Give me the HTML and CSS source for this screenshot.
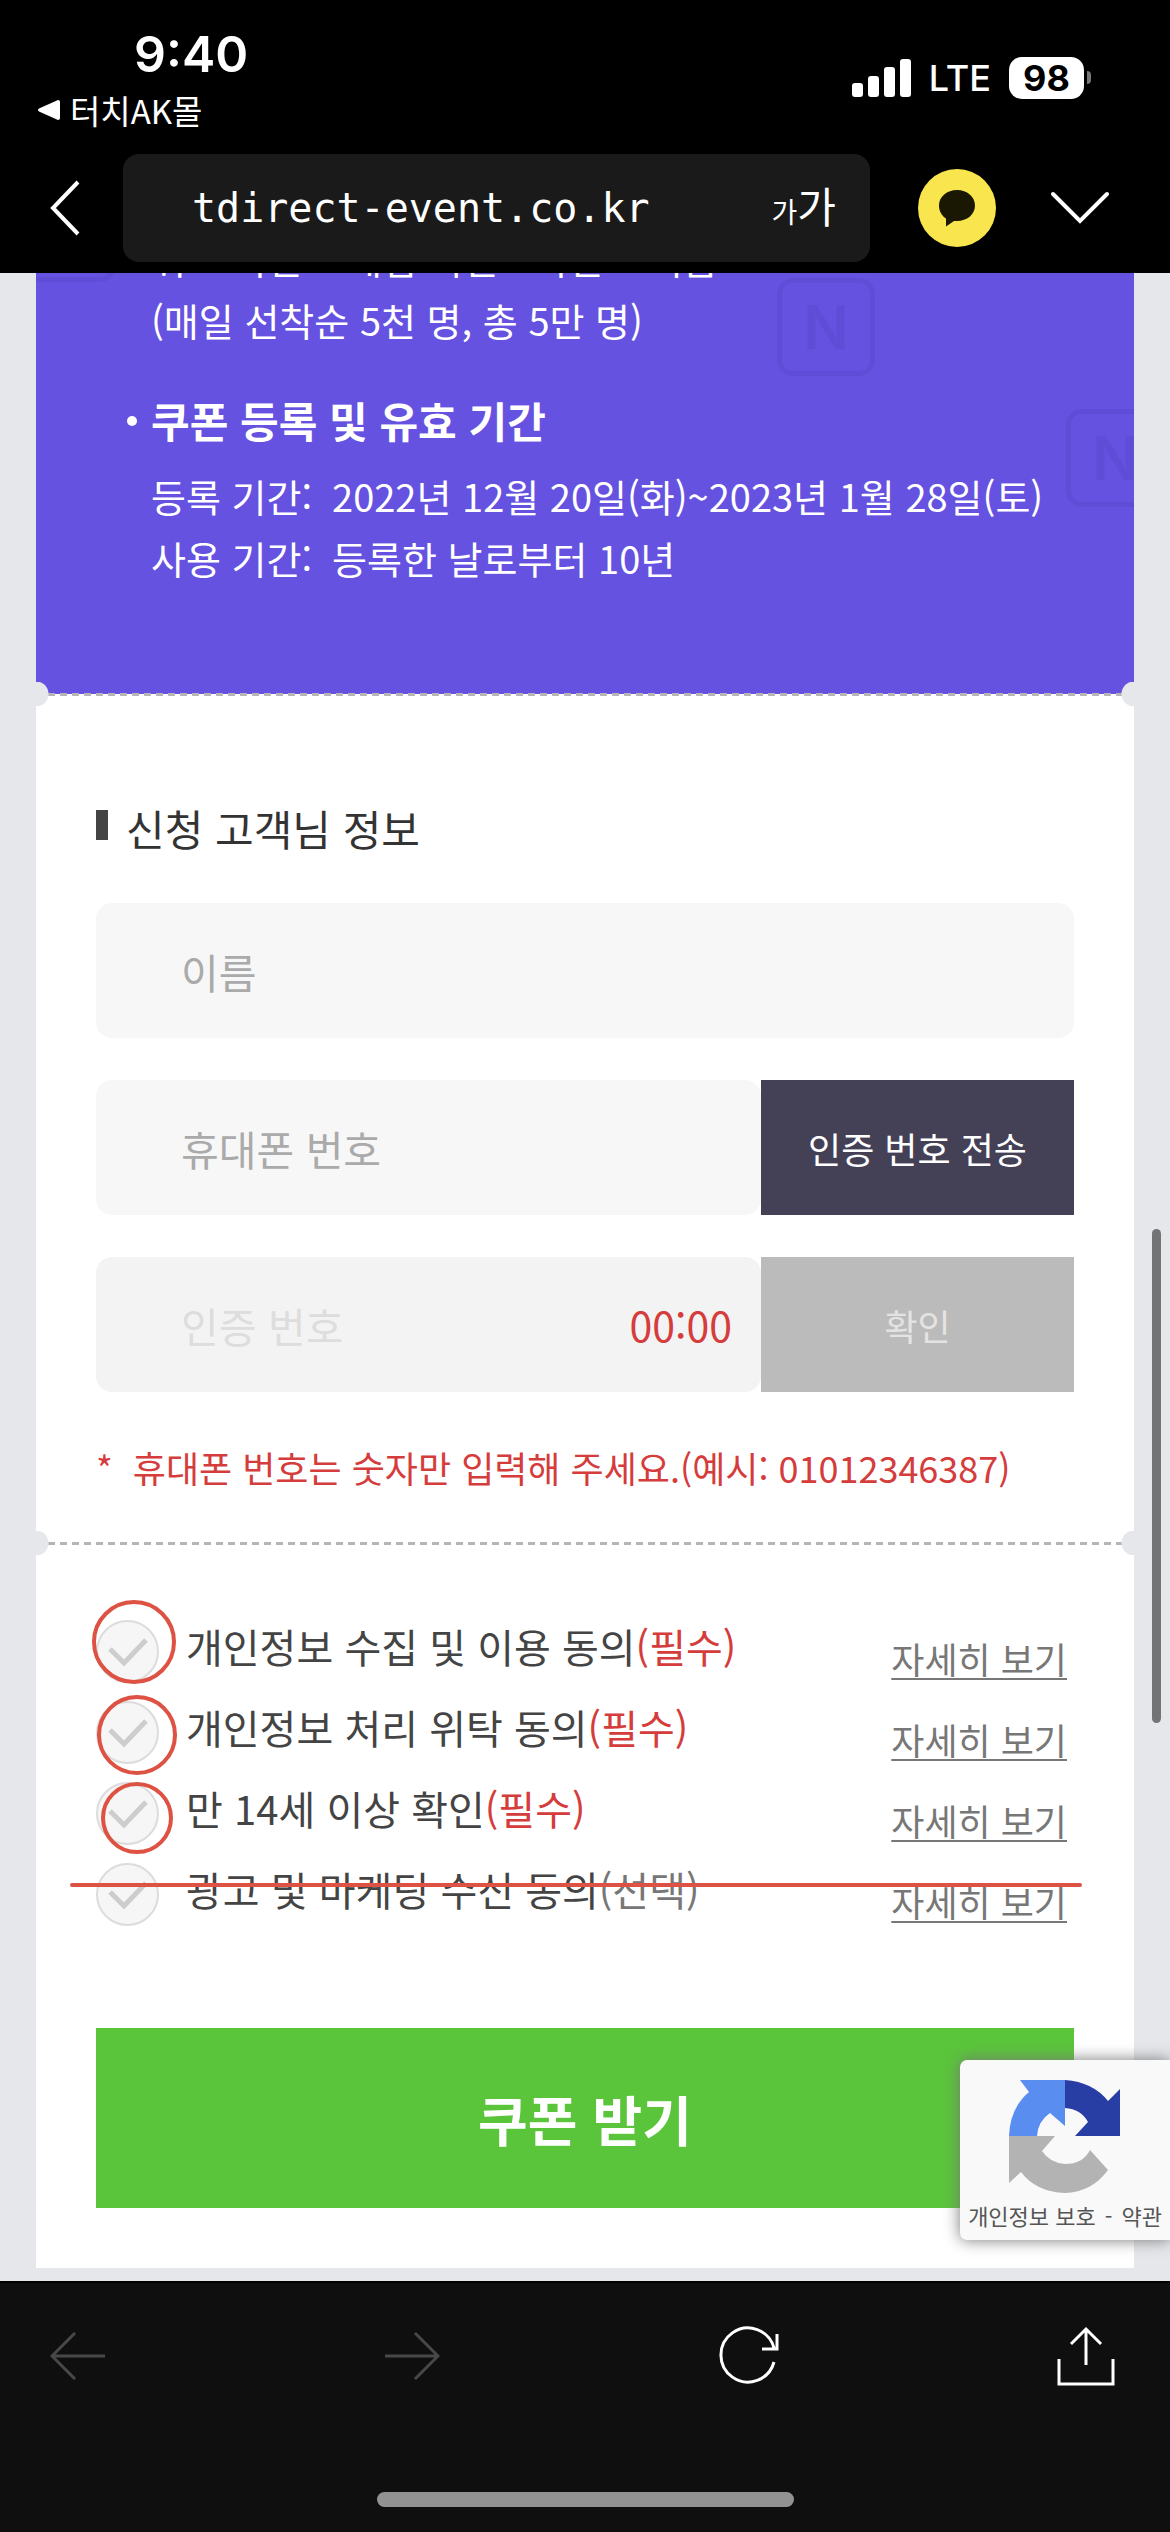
FILE: index.html
```html
<!DOCTYPE html>
<html lang="ko">
<head>
<meta charset="utf-8">
<meta name="viewport" content="width=device-width">
<title>쿠폰 받기</title>
<link rel="stylesheet" href="styles.css">
</head>
<body>
<header class="top">
  <div class="status">
    <div class="status-left">
      <time class="clock">9:40</time>
      <a class="return-app" href="#">
        <svg width="22" height="20" viewBox="0 0 22 20" aria-hidden="true"><path d="M20 0Q22 0 22 2V18Q22 20 20 20L1 11.500Q-1 10 1 8.500Z" fill="#fff"/></svg>
        터치AK몰
      </a>
    </div>
    <div class="status-right">
      <svg width="59" height="38" viewBox="0 0 59 38" fill="#fff" aria-hidden="true"><rect y="24" width="11" height="14" rx="3"/><rect x="16" y="17" width="11" height="21" rx="3"/><rect x="32" y="8" width="11" height="30" rx="3"/><rect x="48" width="11" height="38" rx="3"/></svg>
      <span class="network">LTE</span>
      <span class="battery">98</span>
    </div>
  </div>
  <nav class="browser-bar">
    <button class="icon-button back" aria-label="닫기"><svg width="30" height="56" viewBox="0 0 30 56" fill="none" stroke="#fff" stroke-width="4"><path d="M28 2L3 28L28 54"/></svg></button>
    <div class="address">
      <input class="url" type="text" value="tdirect-event.co.kr" aria-label="주소" readonly>
      <button class="text-size" aria-label="글자 크기"><span class="small-ga">가</span><span>가</span></button>
    </div>
    <button class="icon-button talk" aria-label="공유"><svg width="80" height="80" viewBox="0 0 80 80"><circle cx="40" cy="40" r="39" fill="#f9e54d"/><path d="M40 22C30 22 22 28.500 22 37.500C22 43.500 25 48 29 50.500V58.500L37 53H40C50 53 58 46.500 58 37.500C58 28.500 50 22 40 22Z" fill="#1a1703"/></svg></button>
    <button class="icon-button" aria-label="메뉴"><svg width="60" height="34" viewBox="0 0 60 34" fill="none" stroke="#fff" stroke-width="4" stroke-linecap="round"><path d="M3 3L30 30L57 3"/></svg></button>
  </nav>
</header>

<main class="page">
  <section class="notice">
    <span class="tile tile-left" aria-hidden="true"></span>
    <span class="tile tile-middle" aria-hidden="true">N</span>
    <span class="tile tile-right" aria-hidden="true">N</span>
    <p class="notice-line notice-first">퀴즈 이벤트 게임 이벤트이벤트 지급</p>
    <p class="notice-line">(매일 선착순 5천 명, 총 5만 명)</p>
    <h2 class="notice-title">쿠폰 등록 및 유효 기간</h2>
    <dl class="dates">
      <div class="date-row"><dt>등록 기간:</dt><dd>2022년 12월 20일(화)~2023년 1월 28일(토)</dd></div>
      <div class="date-row"><dt>사용 기간:</dt><dd>등록한 날로부터 10년</dd></div>
    </dl>
  </section>

  <form class="coupon">
    <section class="customer ticket-edge">
      <h2 class="section-title">신청 고객님 정보</h2>
      <div class="fields">
        <input class="field" type="text" placeholder="이름" aria-label="이름">
        <div class="field-row">
          <input class="field" type="tel" placeholder="휴대폰 번호" aria-label="휴대폰 번호">
          <button class="side-button" type="button">인증 번호 전송</button>
        </div>
        <div class="field-row">
          <div class="code-box">
            <input class="field" type="text" placeholder="인증 번호" aria-label="인증 번호" disabled>
            <span class="timer">00:00</span>
          </div>
          <button class="side-button" type="button" disabled>확인</button>
        </div>
      </div>
      <p class="hint"><span class="star">*</span>휴대폰 번호는 숫자만 입력해 주세요.(예시: 01012346387)</p>
    </section>

    <section class="terms ticket-edge">
      <ul class="term-list">
        <li class="term"><label class="term-label"><input class="check" type="checkbox"><span>개인정보 수집 및 이용 동의<em class="required">(필수)</em></span></label><a class="detail" href="#">자세히 보기</a></li>
        <li class="term"><label class="term-label"><input class="check" type="checkbox"><span>개인정보 처리 위탁 동의<em class="required">(필수)</em></span></label><a class="detail" href="#">자세히 보기</a></li>
        <li class="term"><label class="term-label"><input class="check" type="checkbox"><span>만 14세 이상 확인<em class="required">(필수)</em></span></label><a class="detail" href="#">자세히 보기</a></li>
        <li class="term"><label class="term-label"><input class="check" type="checkbox"><span>광고 및 마케팅 수신 동의<em class="optional">(선택)</em></span></label><a class="detail" href="#">자세히 보기</a></li>
      </ul>
      <svg class="marks" width="1020" height="300" viewBox="0 0 1020 300" fill="none" stroke="#dd5242" stroke-width="4" stroke-linecap="round" aria-hidden="true">
        <circle cx="66" cy="43" r="40"/><circle cx="69" cy="136" r="38"/><circle cx="69" cy="219" r="34"/><path d="M4 286H1012"/>
      </svg>
      <button class="submit" type="submit">쿠폰 받기</button>
    </section>
  </form>

  <aside class="captcha">
    <svg width="112" height="114" viewBox="0 0 112 114" aria-hidden="true">
      <path d="M11 0H56V46L41 33Q29 41 28 56H0Q1 28 20 12Z" fill="#5a8df0"/>
      <path d="M56 0Q84 2 99 21L111 9V56H66L79 42Q72 29 56 28Z" fill="#283ea5"/>
      <path d="M0 56H46L33 71Q41 83 56 84Q74 84 81 70L99 90Q83 112 56 113Q27 112 12 92L0 103Z" fill="#b3b3b3"/>
    </svg>
    <p class="captcha-links"><a href="#">개인정보 보호</a><span>-</span><a href="#">약관</a></p>
  </aside>
  <span class="scrollbar" aria-hidden="true"></span>
</main>

<footer class="toolbar">
  <nav class="tools">
    <button class="icon-button" aria-label="뒤로" disabled><svg width="56" height="48" viewBox="0 0 56 48" fill="none" stroke="#484848" stroke-width="3"><path d="M55 24H2M25 1L2 24L25 47"/></svg></button>
    <button class="icon-button" aria-label="앞으로" disabled><svg width="56" height="48" viewBox="0 0 56 48" fill="none" stroke="#484848" stroke-width="3"><path d="M1 24H54M31 1L54 24L31 47"/></svg></button>
    <button class="icon-button" aria-label="새로 고침"><svg width="60" height="60" viewBox="0 0 60 60" fill="none" stroke="#fff" stroke-width="3"><path d="M55 36A27 27 0 1 1 55 22M58 8V23H43"/></svg></button>
    <button class="icon-button" aria-label="공유"><svg width="58" height="60" viewBox="0 0 58 60" fill="none" stroke="#fff" stroke-width="3"><path d="M2 33V58H56V33M29 39V3M14 18L29 3L44 18"/></svg></button>
  </nav>
  <span class="home-indicator"></span>
</footer>
</body>
</html>
```

FILE: styles.css
```css
* {
  box-sizing: border-box;
}

body {
  margin: 0;
  background: #0f0f0f;
  color: #444;
  font-family: "Noto Sans CJK KR", sans-serif;
  font-size: 40px;
}

h2, p, dl, dd, ul {
  margin: 0;
  padding: 0;
}

a {
  color: inherit;
  text-decoration: none;
}

button, input {
  margin: 0;
  padding: 0;
  border: 0;
  border-radius: 0;
  background: none;
  color: inherit;
  font: inherit;
}

svg {
  display: block;
}

.icon-button {
  flex: none;
}

/* Phone status and address bar */
.top {
  background: #000;
  color: #fff;
}

.status {
  display: flex;
  justify-content: space-between;
  height: 142px;
  padding: 24px 86px 0 38px;
}

.clock {
  display: block;
  padding-left: 96px;
  font: 600 50px/60px Inter, sans-serif;
}

.return-app {
  display: flex;
  align-items: center;
  gap: 10px;
  font-size: 33px;
  line-height: 52px;
}

.status-right {
  display: flex;
  align-items: center;
  gap: 18px;
  height: 108px;
  font-family: Inter, sans-serif;
}

.network {
  font-size: 36px;
  font-weight: 500;
  line-height: 42px;
}

.battery {
  position: relative;
  width: 75px;
  border-radius: 13px;
  background: #fff;
  color: #000;
  font-size: 36px;
  font-weight: 700;
  line-height: 42px;
  text-align: center;
}

.battery::after {
  content: "";
  position: absolute;
  top: 14px;
  right: -7px;
  width: 4px;
  height: 13px;
  border-radius: 0 4px 4px 0;
  background: #777;
}

.browser-bar {
  display: flex;
  align-items: center;
  height: 131px;
  padding: 0 60px 0 50px;
}

.back {
  margin-right: 43px;
}

.address {
  display: flex;
  flex: 1;
  align-items: center;
  justify-content: space-between;
  height: 108px;
  min-width: 0;
  padding: 0 34px 0 69px;
  border-radius: 16px;
  background: #1a1a1a;
}

.url {
  flex: 1;
  min-width: 0;
  font: 40px/60px "DejaVu Sans Mono", monospace;
}

.text-size {
  display: flex;
  align-items: baseline;
  font-size: 42px;
  line-height: 60px;
}

.small-ga {
  font-size: 28px;
}

.talk {
  margin: 0 53px 0 47px;
}

/* Coupon page */
.page {
  position: relative;
  overflow: hidden;
  padding: 0 36px 13px;
  background: #e5e7eb;
}

.notice {
  position: relative;
  overflow: hidden;
  padding: 0 40px 105px 115px;
  background: #6652e0;
  color: #fff;
  font-size: 38px;
  line-height: 62px;
}

.notice-line {
  position: relative;
}

.notice-first {
  margin-top: -46px;
}

.notice-title {
  position: relative;
  margin: 38px 0 14px;
  font-size: 42px;
  font-weight: 700;
  line-height: 62px;
}

.notice-title::before {
  content: "";
  position: absolute;
  top: 27px;
  left: -24px;
  width: 10px;
  height: 10px;
  border-radius: 50%;
  background: #fff;
}

.dates {
  position: relative;
}

.date-row {
  display: flex;
  gap: 20px;
}

.tile {
  position: absolute;
  width: 98px;
  height: 98px;
  border: 5px solid #604dd7;
  border-radius: 16px;
  color: #604dd7;
  font: 600 60px/88px Inter, sans-serif;
  text-align: center;
}

.tile-left {
  top: -89px;
  left: -18px;
}

.tile-middle {
  top: 5px;
  right: 259px;
}

.tile-right {
  top: 136px;
  right: -30px;
}

.coupon {
  background: #fff;
}

/* Tear line with a notch at each end */
.ticket-edge {
  position: relative;
  padding: 0 60px;
}

.ticket-edge::before {
  content: "";
  position: absolute;
  top: -12px;
  left: 0;
  right: 0;
  height: 24px;
  background:
    radial-gradient(circle at 0 50%, #e5e7eb 12px, transparent 13px) left / 13px 24px no-repeat,
    radial-gradient(circle at 100% 50%, #e5e7eb 12px, transparent 13px) right / 13px 24px no-repeat,
    repeating-linear-gradient(90deg, #b5b5b5 0 7px, transparent 7px 12px) center / calc(100% - 24px) 3px no-repeat;
}

.customer {
  padding-top: 104px;
  padding-bottom: 46px;
}

.section-title {
  display: flex;
  align-items: center;
  gap: 18px;
  color: #333;
  font-size: 42px;
  font-weight: 400;
  line-height: 60px;
}

.section-title::before {
  content: "";
  width: 12px;
  height: 30px;
  margin-bottom: 6px;
  background: #444;
}

.fields {
  display: grid;
  gap: 42px;
  margin-top: 45px;
}

.field {
  display: block;
  width: 100%;
  height: 135px;
  padding: 0 85px;
  border-radius: 16px;
  background: #f7f7f7;
  font-size: 41px;
}

.field::placeholder {
  color: #aaa;
  opacity: 1;
}

.field:disabled {
  background: #f3f3f3;
}

.field:disabled::placeholder {
  color: #ddd;
}

.field-row {
  display: grid;
  grid-template-columns: minmax(0, 1fr) 313px;
}

.code-box {
  position: relative;
}

.timer {
  position: absolute;
  top: 0;
  right: 29px;
  color: #d53c3c;
  font-size: 41px;
  line-height: 135px;
}

.side-button {
  background: #444157;
  color: #fff;
  font-size: 36px;
}

.side-button:disabled {
  background: #bbb;
  color: #e3e3e3;
}

.hint {
  display: flex;
  gap: 20px;
  margin-top: 45px;
  color: #d53c3c;
  font-size: 36px;
  line-height: 60px;
}

.terms {
  padding-top: 62px;
  padding-bottom: 60px;
}

.term-list {
  list-style: none;
}

.term {
  display: flex;
  align-items: center;
  justify-content: space-between;
  height: 81px;
  padding-right: 7px;
  line-height: 60px;
}

.term-label {
  display: flex;
  align-items: center;
  gap: 27px;
}

.check {
  appearance: none;
  width: 63px;
  height: 63px;
  margin-top: 12px;
  border: 2px solid #dcdcdc;
  border-radius: 50%;
  background: #f6f6f6 url("data:image/svg+xml,%3Csvg xmlns='http://www.w3.org/2000/svg' viewBox='0 0 59 59'%3E%3Cpath d='M12 27L26 41L48 18' fill='none' stroke='%23cdcdcd' stroke-width='5'/%3E%3C/svg%3E") center / 59px no-repeat;
}

.required,
.optional {
  color: #d53c3c;
  font-style: normal;
}

.optional {
  color: #777;
}

.detail {
  margin-top: 24px;
  color: #777;
  font-size: 36px;
  text-decoration: underline;
  text-decoration-skip-ink: none;
  text-decoration-thickness: 2px;
  text-underline-offset: 4px;
}

/* Hand-drawn marks over the agreement list */
.marks {
  position: absolute;
  top: 56px;
  left: 32px;
  pointer-events: none;
}

.submit {
  display: block;
  width: 100%;
  height: 180px;
  margin-top: 99px;
  background: #5ac53a;
  color: #fff;
  font-size: 54px;
  font-weight: 700;
}

.captcha {
  position: absolute;
  right: 0;
  bottom: 41px;
  display: flex;
  flex-direction: column;
  align-items: center;
  width: 210px;
  height: 180px;
  padding-top: 20px;
  border-radius: 7px 0 0 7px;
  background: #f9f9f9;
  box-shadow: 0 0 16px #777;
}

.captcha-links {
  display: flex;
  gap: 9px;
  color: #555;
  font-size: 22px;
  line-height: 42px;
}

.scrollbar {
  position: absolute;
  top: 956px;
  right: 9px;
  width: 9px;
  height: 494px;
  border-radius: 5px;
  background: #737476;
}

/* Browser toolbar */
.toolbar {
  display: flex;
  flex-direction: column;
  align-items: center;
  justify-content: space-between;
  height: 250px;
  padding-bottom: 24px;
  border-top: 2px solid #000;
  background: #0f0f0f;
}

.tools {
  display: flex;
  align-items: center;
  justify-content: space-between;
  width: 100%;
  height: 146px;
  padding: 0 55px 0 50px;
}

.home-indicator {
  width: 417px;
  height: 15px;
  border-radius: 8px;
  background: #929292;
}
```
